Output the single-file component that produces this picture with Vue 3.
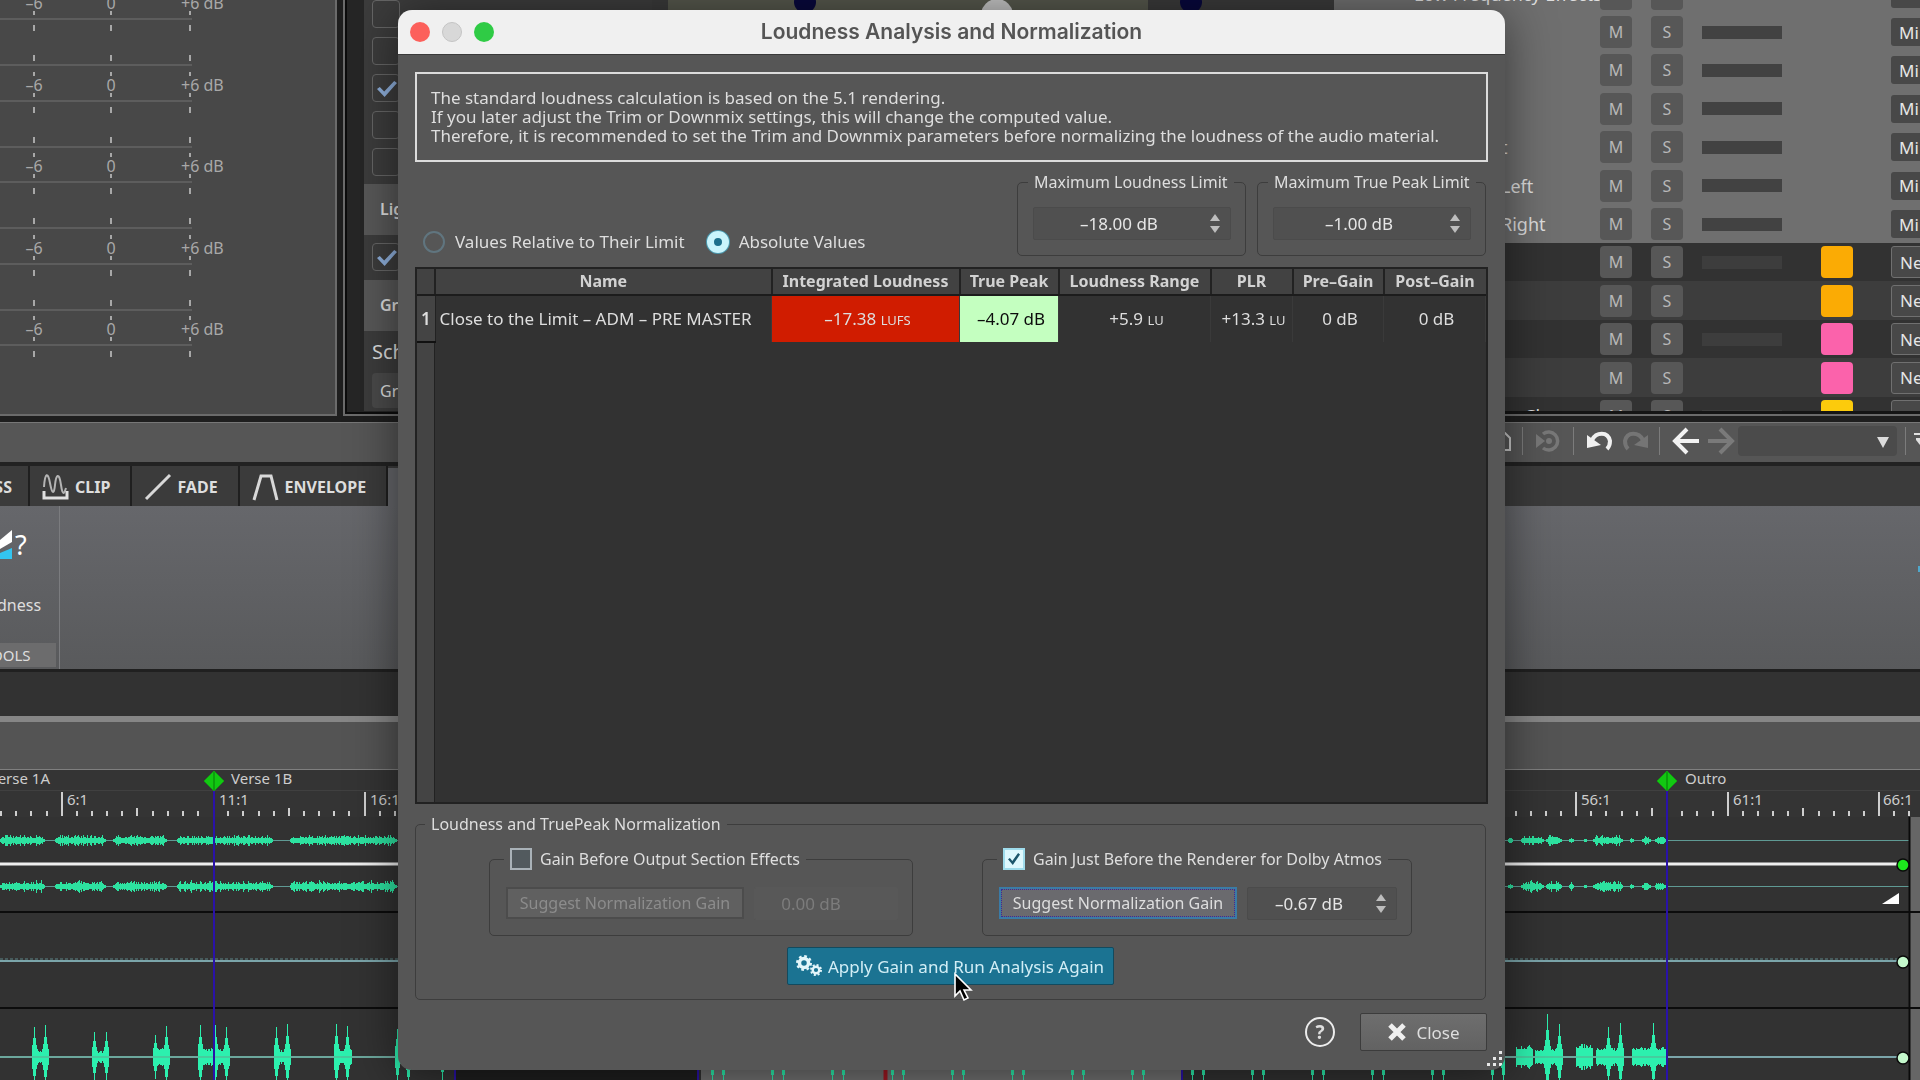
<template>
  <div class="desktop">
    <div class="panels">
      <section class="meters" aria-label="Meters">
        <svg class="meter-scale" aria-hidden="true">
          <g v-for="y in meterRows" :key="y">
            <text class="scale-text" x="34" :y="y + 6" text-anchor="middle">–6</text>
            <text class="scale-text" x="111" :y="y + 6" text-anchor="middle">0</text>
            <text class="scale-text" x="181" :y="y + 6">+6 dB</text>
            <path
              v-for="x in [34, 111, 190]"
              :key="x"
              class="scale-tick"
              :d="`M${x} ${y - 13}v4M${x} ${y + 8}v4M${x} ${y + 22}v6M${x} ${y + 52}v6`"
            />
            <path class="scale-line" :d="`M0 ${y + 16}H192M0 ${y + 62}H192`" />
          </g>
          <rect x="0" y="364" width="330" height="40" fill="#484848" />
        </svg>
      </section>

      <section class="settings" aria-label="Settings">
        <div class="settings-inner">
          <div class="tile-group">
            <input v-for="(on, i) in tiles" :key="i" type="checkbox" class="tile" :checked="on" :aria-label="`Option ${i + 1}`" />
          </div>
          <div class="settings-head">Lig</div>
          <div class="tile-group single">
            <input type="checkbox" class="tile" checked aria-label="Light option" />
          </div>
          <div class="settings-head">Gr</div>
          <div class="settings-label">Sch</div>
          <button class="settings-btn">Gr</button>
        </div>
      </section>

      <section class="scene" aria-label="Scene">
        <svg width="666" height="12" aria-hidden="true">
          <rect x="16" width="480" height="12" fill="#55574c" />
          <circle cx="153" cy="2" r="11" fill="#08083c" />
          <circle cx="345" cy="15" r="16" fill="#c4c4c4" />
          <circle cx="539" cy="2" r="11" fill="#08083c" />
        </svg>
      </section>

      <section class="channels" aria-label="Channels">
        <div v-for="(row, i) in channels" :key="i" class="channel" :class="{ dark: row.color, alt: row.alt }">
          <span class="channel-name" :class="row.place">{{ row.name }}</span>
          <button class="ms">M</button>
          <button class="ms">S</button>
          <span class="level"></span>
          <span class="swatch" :class="row.color"></span>
          <select class="channel-select" :aria-label="`Channel ${i + 1} type`">
            <option>{{ row.color ? 'Ne' : 'Mi' }}</option>
          </select>
        </div>
      </section>
    </div>

    <div class="toolbar">
      <button class="tool" aria-label="Page">
        <svg width="28" height="24" viewBox="0 0 28 24"><path d="M8 4h13l5 5v12H8z" fill="none" stroke="#c8c8c8" stroke-width="2" /></svg>
      </button>
      <i class="sep"></i>
      <button class="tool wide" aria-label="Target" disabled>
        <svg width="26" height="26" viewBox="0 0 26 26">
          <path d="M8 6A9 9 0 1 1 8 20" fill="none" stroke="#787878" stroke-width="3.500" />
          <path d="M1 6v14l9-7z" fill="#787878" />
          <circle cx="14" cy="13" r="3" fill="#787878" />
        </svg>
      </button>
      <i class="sep"></i>
      <button class="tool" aria-label="Undo">
        <svg width="28" height="26" viewBox="0 0 28 26">
          <path d="M6 12C10 4 22 3 24 13c0 4-1 6-3 8" fill="none" stroke="#f0f0f0" stroke-width="4" />
          <path d="M1 7v13l14-3z" fill="#f0f0f0" />
        </svg>
      </button>
      <button class="tool" aria-label="Redo" disabled>
        <svg width="28" height="26" viewBox="0 0 28 26">
          <path d="M22 12C18 4 6 3 4 13c0 4 1 6 3 8" fill="none" stroke="#757575" stroke-width="4" />
          <path d="M27 7v13l-14-3z" fill="#757575" />
        </svg>
      </button>
      <i class="sep"></i>
      <button class="tool" aria-label="Back">
        <svg width="28" height="28" viewBox="0 0 28 28"><path d="M27 14H4M15 2L3 14l12 12" fill="none" stroke="#f2f2f2" stroke-width="4" /></svg>
      </button>
      <button class="tool" aria-label="Forward" disabled>
        <svg width="28" height="28" viewBox="0 0 28 28"><path d="M1 14h23M13 2l12 12-12 12" fill="none" stroke="#7a7a7a" stroke-width="4" /></svg>
      </button>
      <span class="combo">
        <select aria-label="History"><option></option></select>
      </span>
      <i class="sep"></i>
      <svg class="menu-cut" width="6" height="20" viewBox="0 0 6 20" aria-hidden="true"><path d="M0 3h6M2 8h4" stroke="#e0e0e0" stroke-width="2" /><path d="M2 9l4 5V9z" fill="#e0e0e0" /></svg>
    </div>

    <nav class="tabs">
      <button class="tab tab-cut">SS</button>
      <button class="tab">
        <svg width="28" height="28" viewBox="0 0 28 28"><path d="M2 14C3-1 6-1 8 10s4 12 5 2 4-14 6 0 4 6 5 3" fill="none" stroke="#b4b4b4" stroke-width="2" /><path d="M2 18v7h23v-7" fill="none" stroke="#e0e0e0" stroke-width="3" /></svg>
        CLIP
      </button>
      <button class="tab">
        <svg width="28" height="28" viewBox="0 0 28 28"><path d="M2 26L26 2" stroke="#d8d8d8" stroke-width="3" /></svg>
        FADE
      </button>
      <button class="tab">
        <svg width="28" height="28" viewBox="0 0 28 28"><path d="M2 27L9 3h10l6 24" fill="none" stroke="#d8d8d8" stroke-width="3" /></svg>
        ENVELOPE
      </button>
      <span class="tab-active"></span>
    </nav>

    <div class="ribbon">
      <div class="ribbon-group">
        <button class="ribbon-tool">
          <svg width="42" height="36" viewBox="0 0 42 36" aria-hidden="true">
            <path d="M0 14L12 4v12L0 23z" fill="#fff" />
            <path d="M0 27l12-5v11H0z" fill="#33c4f0" />
            <text x="15" y="29" class="question">?</text>
          </svg>
          <span>dness</span>
        </button>
        <div class="ribbon-title">OOLS</div>
      </div>
      <i class="ribbon-dot"></i>
    </div>
    <div class="gap-bar"></div>
    <div class="scroll-bar"></div>

    <div class="timeline">
      <svg class="timeline-art" aria-hidden="true">
        <rect x="0" y="0" width="100%" height="47" fill="#343434" />
        <path d="M0 20.500H1920" stroke="#404040" />
        <path :d="ticks" stroke="#cfcfcf" stroke-width="2" />
        <text v-for="m in bars" :key="m.text" class="ruler-text" :x="m.x" y="35">{{ m.text }}</text>
        <text class="ruler-text" x="50" y="14" text-anchor="end">erse 1A</text>
        <text class="ruler-text" x="231" y="14">Verse 1B</text>
        <text class="ruler-text" x="1685" y="14">Outro</text>

        <rect x="1910" y="47" width="400" height="300" fill="#666" />
        <rect x="456" y="298" width="243" height="40" fill="#1f1f1f" />
        <rect x="701" y="298" width="481" height="40" fill="#707070" />

        <path d="M0 70.500H1909M0 116.500H1909" stroke="#5f9a94" stroke-width="1" />
        <path :d="stereo" stroke="#2de2a0" stroke-width="1" />
        <path d="M0 94H1903" stroke="#efefef" stroke-width="3" />
        <path d="M0 142H1920M0 238H1920" stroke="#0c0c0c" stroke-width="2" />
        <path d="M0 191H1903M0 287H1903" stroke="#7ba5aa" stroke-width="2" />
        <path d="M0 189H1903" stroke="#5d8487" stroke-width="1" stroke-dasharray="3 2" />
        <path :d="bursts" stroke="#2cf0ae" stroke-width="1" />
        <path d="M0 287H396M1505 287H1668" stroke="#5fa98f" stroke-width="1" />
        <path d="M885.500 298v20" stroke="#a01822" stroke-width="4" />

        <path d="M214 20V400M1667 20V400M455 298v20M698 298v20M1182 298v20" stroke="#2a12a8" stroke-width="2" />
        <g v-for="x in [214, 1667]" :key="x">
          <path :d="`M${x} 1l10 10l-10 10l-10 -10z`" fill="#12c812" stroke="#12a012" stroke-width="1" />
          <path :d="`M${x} 2v18`" stroke="#067806" />
        </g>
        <path d="M1909.500 47V400" stroke="#0a0a0a" stroke-width="2" />
        <circle cx="1903" cy="95" r="6" fill="#1de81d" stroke="#0a0a0a" stroke-width="1.500" />
        <circle cx="1903" cy="192" r="6" fill="#c4f8cc" stroke="#0a0a0a" stroke-width="1.500" />
        <circle cx="1903" cy="288" r="6" fill="#c4f8cc" stroke="#0a0a0a" stroke-width="1.500" />
        <path d="M1882 134l17-11v11z" fill="#fff" />
      </svg>
    </div>

    <div class="dialog" role="dialog" aria-labelledby="dialog-title">
      <header class="titlebar">
        <button class="light red" aria-label="Close window"></button>
        <button class="light grey" aria-label="Minimize window"></button>
        <button class="light green" aria-label="Zoom window"></button>
        <h1 id="dialog-title">Loudness Analysis and Normalization</h1>
      </header>

      <div class="dialog-body">
        <p class="info">
          The standard loudness calculation is based on the 5.1 rendering.<br />
          If you later adjust the Trim or Downmix settings, this will change the computed value.<br />
          Therefore, it is recommended to set the Trim and Downmix parameters before normalizing the loudness of the audio material.
        </p>

        <div class="limits">
          <div class="modes">
            <label><input v-model="mode" type="radio" value="relative" class="radio" />Values Relative to Their Limit</label>
            <label><input v-model="mode" type="radio" value="absolute" class="radio" />Absolute Values</label>
          </div>
          <fieldset class="limit">
            <legend>Maximum Loudness Limit</legend>
            <span class="spin">
              <input v-model="maxLoudness" type="text" aria-label="Maximum Loudness Limit" />
              <span class="arrows"><button class="up" aria-label="Increase"></button><button class="down" aria-label="Decrease"></button></span>
            </span>
          </fieldset>
          <fieldset class="limit">
            <legend>Maximum True Peak Limit</legend>
            <span class="spin">
              <input v-model="maxPeak" type="text" aria-label="Maximum True Peak Limit" />
              <span class="arrows"><button class="up" aria-label="Increase"></button><button class="down" aria-label="Decrease"></button></span>
            </span>
          </fieldset>
        </div>

        <div class="results">
          <table>
            <colgroup>
              <col class="c-index" /><col /><col class="c-loud" /><col class="c-peak" /><col class="c-range" />
              <col class="c-plr" /><col class="c-pre" /><col class="c-post" />
            </colgroup>
            <thead>
              <tr>
                <th></th>
                <th v-for="h in headers" :key="h">{{ h }}</th>
              </tr>
            </thead>
            <tbody>
              <tr>
                <th class="index">1</th>
                <td class="name">Close to the Limit – ADM – PRE MASTER</td>
                <td class="over">–17.38 <span class="unit">LUFS</span></td>
                <td class="ok">–4.07 dB</td>
                <td>+5.9 <span class="unit">LU</span></td>
                <td>+13.3 <span class="unit">LU</span></td>
                <td>0 dB</td>
                <td>0 dB</td>
              </tr>
            </tbody>
          </table>
        </div>

        <fieldset class="normalization">
          <legend>Loudness and TruePeak Normalization</legend>
          <div class="gains">
            <fieldset class="gain">
              <legend><label><input v-model="gainBefore" type="checkbox" class="check" />Gain Before Output Section Effects</label></legend>
              <button class="suggest" disabled>Suggest Normalization Gain</button>
              <span class="spin off">
                <input type="text" value="0.00 dB" disabled aria-label="Gain before output section" />
              </span>
            </fieldset>
            <fieldset class="gain">
              <legend><label><input v-model="gainRenderer" type="checkbox" class="check" />Gain Just Before the Renderer for Dolby Atmos</label></legend>
              <button class="suggest focused">Suggest Normalization Gain</button>
              <span class="spin">
                <input v-model="rendererGain" type="text" aria-label="Gain before renderer" />
                <span class="arrows"><button class="up" aria-label="Increase"></button><button class="down" aria-label="Decrease"></button></span>
              </span>
            </fieldset>
          </div>
          <button class="apply">
            <svg width="26" height="22" viewBox="0 0 26 22" aria-hidden="true">
              <circle cx="8" cy="8" r="4.500" fill="none" stroke="#e4f6fa" stroke-width="3.500" />
              <circle cx="8" cy="8" r="6.800" fill="none" stroke="#e4f6fa" stroke-width="2.400" stroke-dasharray="2.700 2.640" />
              <circle cx="20" cy="15" r="3.300" fill="none" stroke="#e4f6fa" stroke-width="2.400" />
              <circle cx="20" cy="15" r="5" fill="none" stroke="#e4f6fa" stroke-width="2" stroke-dasharray="2 1.927" />
            </svg>
            Apply Gain and Run Analysis Again
          </button>
        </fieldset>

        <footer class="actions">
          <button class="help" aria-label="Help">?</button>
          <button class="close">
            <svg width="20" height="20" viewBox="0 0 20 20" aria-hidden="true"><path d="M3 3l14 14M17 3L3 17" stroke="#efefef" stroke-width="5" /></svg>
            Close
          </button>
        </footer>
      </div>

      <svg class="grip" width="18" height="18" viewBox="0 0 18 18" aria-hidden="true">
        <path d="M14 1h3v3h-3zM8 7h3v3H8zM14 7h3v3h-3zM2 13h3v3H2zM8 13h3v3H8zM14 13h3v3h-3z" fill="#e8e8e8" />
      </svg>
    </div>

    <svg class="cursor" width="20" height="30" viewBox="0 0 20 30" aria-hidden="true">
      <path d="M2 2v22l5-5 4 9 4-2-4-8h7z" fill="#000" stroke="#fff" stroke-width="1.600" />
    </svg>
  </div>
</template>

<script setup>
import { ref } from 'vue'

const mode = ref('absolute')
const maxLoudness = ref('–18.00 dB')
const maxPeak = ref('–1.00 dB')
const gainBefore = ref(false)
const gainRenderer = ref(true)
const rendererGain = ref('–0.67 dB')

const headers = ['Name', 'Integrated Loudness', 'True Peak', 'Loudness Range', 'PLR', 'Pre–Gain', 'Post–Gain']

const meterRows = [3, 85, 166, 248, 329]
const tiles = [false, false, true, false, false]

const channels = [
  { name: 'Low Frequency Effects' },
  { name: '' },
  { name: '' },
  { name: '' },
  { name: 't', place: 'far' },
  { name: 'Left', place: 'far' },
  { name: 'Right', place: 'far' },
  { name: '', color: 'orange' },
  { name: '', color: 'orange', alt: true },
  { name: '', color: 'pink' },
  { name: '', color: 'pink', alt: true },
  { name: 'Cl', color: 'yellow', place: 'tail' }
]

const bars = [
  { x: 67, text: '6:1' },
  { x: 219, text: '11:1' },
  { x: 370, text: '16:1' },
  { x: 1581, text: '56:1' },
  { x: 1733, text: '61:1' },
  { x: 1883, text: '66:1' }
]

// one tick per bar, taller in the middle and at every numbered bar; none under a marker
let ticks = ''
for (let i = -4; i <= 122; i++) {
  if (i === 10 || i === 106) continue
  const x = Math.round(61.700 + i * 15.145)
  const n = ((i % 10) + 10) % 10
  const h = n === 0 ? 24 : n === 5 ? 8 : 5
  ticks += `M${x} ${46 - h}V46`
}

let seed = 7
function rand() {
  seed = (seed * 16807) % 2147483647
  return seed / 2147483647
}

const segments = [
  [0, 45], [55, 106], [113, 167], [177, 273], [290, 397],
  [1508, 1513], [1521, 1544], [1546, 1562], [1569, 1574], [1584, 1587], [1593, 1623], [1630, 1634], [1642, 1651], [1655, 1666]
]
let stereo = ''
for (const [from, to] of segments) {
  for (let x = from; x < to; x++) {
    const edge = Math.min(1, (x - from + 1) / 4, (to - x) / 4)
    const a = Math.round((2 + rand() * rand() * 4) * edge)
    const b = Math.round((2 + rand() * rand() * 4) * edge)
    stereo += `M${x}.5 ${70 - a}V${71 + a}M${x}.5 ${116 - b}V${117 + b}`
  }
}

// [start, end, body, [spike x, spike height]...]
const hits = [
  [32, 49, 6, [34, 30], [45, 32]],
  [92, 109, 6, [94, 25], [106, 25]],
  [153, 170, 8, [155, 22], [166, 31]],
  [198, 230, 8, [200, 32], [215, 32], [226, 30]],
  [274, 291, 7, [276, 30], [287, 33]],
  [334, 352, 7, [336, 33], [347, 31]],
  [395, 412, 7, [397, 28], [408, 32]],
  [440, 444, 4, [442, 24]],
  [1516, 1533, 11],
  [1535, 1563, 8, [1547, 43], [1559, 33]],
  [1576, 1593, 12],
  [1596, 1624, 9, [1608, 30], [1620, 34]],
  [1632, 1668, 9, [1653, 34]]
]
for (let x = 711; x < 1500; x += 60) hits.push([x, x + 14, 5, [x + 1, 28], [x + 12, 28]])

let bursts = ''
for (const [from, to, body, ...spikes] of hits) {
  for (let x = from; x < to; x++) {
    let a = body * (0.700 + rand() * 0.400)
    for (const [sx, h] of spikes) a = Math.max(a, h * Math.exp(-Math.abs(x - sx) / 2.200))
    a = Math.round(a)
    bursts += `M${x}.5 ${287 - a}V${287 + a}`
  }
}
</script>

<style>
body {
  margin: 0;
  background: #323232;
}
</style>

<style scoped>
.desktop {
  position: relative;
  display: flex;
  flex-direction: column;
  height: 100vh;
  overflow: hidden;
  background: #323232;
  color: #dedede;
  font-family: "Noto Sans", "Open Sans", sans-serif;
  font-size: 16px;
}
button,
input,
select {
  font: inherit;
  color: inherit;
  margin: 0;
  padding: 0;
  border: none;
  background: none;
  appearance: none;
  box-sizing: border-box;
}
svg {
  display: block;
  flex: none;
}

/* top panels */
.panels {
  display: flex;
  height: 416px;
  flex: none;
  background: #1e1e1e;
}
.meters {
  width: 335px;
  flex: none;
  background: #484848;
  border-right: 2px solid #6b6b6b;
  border-bottom: 2px solid #6b6b6b;
  overflow: hidden;
}
.meter-scale {
  width: 100%;
  height: 414px;
}
.scale-text {
  fill: #a8a8a8;
  font-size: 16px;
}
.scale-tick {
  stroke: #a8a8a8;
  stroke-width: 2;
}
.scale-line {
  stroke: #737373;
  stroke-width: 1;
}
.settings {
  flex: 1;
  margin-left: 6px;
  padding: 0 0 3px 15px;
  border-left: 2px solid #6b6b6b;
  border-bottom: 2px solid #6b6b6b;
  background: #262626;
  box-shadow: inset 2px -2px 0 #0c0c0c;
}
.settings-inner {
  display: flex;
  flex-direction: column;
  align-items: flex-start;
  height: 411px;
  margin-left: 4px;
  background: #3c3c3c;
  overflow: hidden;
}
.tile-group {
  display: flex;
  flex-direction: column;
  gap: 9px;
  padding: 0 8px 8px;
}
.tile-group.single {
  padding: 8px 8px 9px;
}
.tile {
  width: 28px;
  height: 28px;
  border: 1px solid #666;
  border-radius: 4px;
}
.tile:checked::before {
  content: "";
  display: block;
  width: 20px;
  height: 16px;
  margin: 6px 4px;
  background: #8fb0dc;
  clip-path: polygon(0 50%, 14% 38%, 36% 66%, 86% 0, 100% 12%, 38% 100%);
}
.settings-head {
  width: 100%;
  padding-left: 16px;
  box-sizing: border-box;
  height: 51px;
  line-height: 51px;
  background: #585858;
  font-weight: 600;
}
.settings-label {
  padding-left: 8px;
  line-height: 42px;
  font-size: 20px;
}
.settings-btn {
  width: 200px;
  height: 35px;
  margin-left: 8px;
  padding-left: 8px;
  text-align: left;
  background: #4a4a4a;
  border-radius: 4px;
}
.scene {
  width: 682px;
  flex: none;
  background: #3a3a3a;
}
.channels {
  width: 586px;
  flex: none;
  height: 411px;
  overflow: hidden;
  border-bottom: 3px solid #151515;
  box-shadow: 0 2px 0 #6b6b6b;
  background: #6f6f6f;
}
.channel {
  display: grid;
  grid-template-columns: 247px 32px 32px 80px 32px 1fr;
  column-gap: 19px;
  align-items: center;
  height: 38px;
}
.channel:nth-child(5n + 1),
.channel:nth-child(5n + 4) {
  height: 39px;
}
.channel:first-child {
  margin-top: -26px;
}
.channel.dark {
  background: #323232;
}
.channel.dark.alt {
  background: #3d3d3d;
}
.channel-name {
  padding-left: 80px;
  font-size: 18px;
  white-space: nowrap;
}
.channel-name.far {
  padding-left: 167px;
}
.channel-name.tail {
  padding-left: 190px;
}
.ms {
  width: 32px;
  height: 32px;
  border-radius: 4px;
  background: #575757;
  color: #b8b8b8;
}
.level {
  height: 13px;
  background: #424242;
}
.dark .level {
  background: #3d3d3d;
}
.swatch {
  width: 32px;
  height: 32px;
  margin-left: 20px;
  border-radius: 4px;
}
.swatch.orange {
  background: #fbab04;
}
.swatch.pink {
  background: #fb62ab;
}
.swatch.yellow {
  background: #fccb0c;
}
.channel-select {
  width: 120px;
  height: 28px;
  margin-left: 39px;
  padding-left: 8px;
  border-radius: 3px;
  background: #484848;
  color: #e6e6e6;
  font-size: 17px;
}
.dark .channel-select {
  height: 32px;
  border: 1px solid #707070;
}

/* toolbar, tabs, ribbon */
.toolbar {
  display: flex;
  align-items: center;
  justify-content: flex-end;
  flex: none;
  height: 42px;
  margin-top: 6px;
  padding-bottom: 3px;
  box-sizing: border-box;
  border-top: 1px solid #777;
  border-bottom: 2px solid #222;
  background: #565656;
  box-shadow: 0 -6px 0 #1e1e1e;
}
.tool {
  width: 35px;
  display: flex;
  justify-content: center;
}
.tool.wide {
  width: 50px;
}
.sep {
  width: 1px;
  height: 28px;
  background: #7c7c7c;
}
.sep + .tool:not(.wide) {
  margin-left: 8px;
}
.tool + .sep {
  margin-left: 7px;
}
.tool.wide + .sep {
  margin-left: 0;
}
.combo {
  position: relative;
  width: 159px;
  height: 30px;
  margin-right: 8px;
}
.combo select {
  width: 100%;
  height: 100%;
  border-radius: 4px;
  background: #4b4b4b;
}
.combo::after {
  content: "";
  position: absolute;
  right: 8px;
  top: 11px;
  border: 6px solid transparent;
  border-top: 11px solid #dcdcdc;
  border-bottom: none;
  pointer-events: none;
}
.menu-cut {
  margin-left: 8px;
}
.tabs {
  display: flex;
  flex: none;
  height: 42px;
  background: #3b3b3b;
  border-top: 2px solid #222;
  box-sizing: border-box;
}
.tab {
  display: flex;
  align-items: center;
  gap: 5px;
  padding: 2px 20px 0 12px;
  border-right: 2px solid #1f1f1f;
  font-size: 16px;
  font-weight: 700;
}
.tab-cut {
  padding: 2px 16px 0 0;
  width: 30px;
  justify-content: flex-end;
}
.tab-active {
  width: 160px;
  margin-top: 2px;
  background: #66676b;
}
.ribbon {
  display: flex;
  flex: none;
  height: 163px;
  justify-content: space-between;
  background: linear-gradient(#66676b, #595a5c);
}
.ribbon-group {
  display: flex;
  flex-direction: column;
  justify-content: space-between;
  width: 59px;
  border-right: 1px solid #7b7c7f;
  overflow: hidden;
}
.ribbon-tool {
  display: flex;
  flex-direction: column;
  gap: 32px;
  padding-top: 20px;
  align-items: flex-start;
}
.ribbon-tool span {
  text-indent: -3px;
}
.question {
  fill: #fff;
  font-size: 27px;
}
.ribbon-title {
  width: 56px;
  height: 24px;
  line-height: 24px;
  margin-bottom: 2px;
  background: #6c6c6d;
  font-size: 15px;
  text-indent: -9px;
}
.ribbon-dot {
  width: 2px;
  height: 6px;
  margin-top: 60px;
  background: #4fa8cc;
}
.gap-bar {
  flex: none;
  height: 47px;
  box-sizing: border-box;
  background: #323232;
  border-top: 3px solid #202020;
}
.scroll-bar {
  flex: none;
  height: 54px;
  box-sizing: border-box;
  background: #545454;
  border-top: 6px solid #868686;
  border-bottom: 1px solid #7f7f7f;
}
.timeline {
  flex: 1;
  min-height: 0;
  overflow: hidden;
}
.timeline-art {
  width: 100%;
  height: 100%;
}
.ruler-text {
  fill: #cdcdcd;
  font-size: 15px;
}

/* dialog */
.dialog {
  position: absolute;
  left: 398px;
  right: 415px;
  top: 10px;
  bottom: 10px;
  display: flex;
  flex-direction: column;
  border-radius: 14px;
  background: #565656;
  overflow: hidden;
  filter: drop-shadow(0 4px 24px rgb(0 0 0 / 0.5));
  font-size: 17px;
}
.titlebar {
  display: flex;
  align-items: center;
  gap: 12px;
  height: 44px;
  flex: none;
  padding: 0 12px;
  background: #f0f0f0;
  border-bottom: 1px solid #3a3a3a;
}
.titlebar h1 {
  flex: 1;
  margin: 0;
  padding-right: 96px;
  text-align: center;
  font-family: Inter, sans-serif;
  font-size: 21px;
  line-height: 24px;
  font-weight: 600;
  color: #555;
}
.light {
  width: 20px;
  height: 20px;
  border-radius: 50%;
}
.light.red {
  background: #fc605b;
}
.light.grey {
  background: #d8d8d8;
  border: 1px solid #c4c4c4;
}
.light.green {
  background: #2fcb45;
}
.dialog-body {
  flex: 1;
  display: flex;
  flex-direction: column;
  padding: 17px 17px 19px;
}
.info {
  margin: 0;
  padding: 14px 14px 15px;
  border: 2px solid #dcdcdc;
  line-height: 19px;
}
.limits {
  display: flex;
  gap: 11px;
  margin: 10px 2px 11px 0;
}
.modes {
  flex: 1;
  display: flex;
  align-items: flex-end;
  gap: 22px;
  padding: 0 0 2px 8px;
}
.modes label {
  display: flex;
  align-items: center;
  gap: 10px;
  line-height: 24px;
}
.radio {
  width: 22px;
  height: 22px;
  border: 2px solid #60757f;
  border-radius: 50%;
}
.radio:checked {
  border: 7px solid #c8f4fc;
  background: #1c6f8c;
  box-shadow: 0 0 0 1px #4a98ae;
}
fieldset {
  margin: 0;
  border: 1px solid #3d3d3d;
  border-radius: 5px;
  min-width: 0;
}
legend {
  padding: 0 6px;
  font-size: 16px;
  line-height: 20px;
  white-space: nowrap;
}
.limit {
  width: 229px;
  box-sizing: border-box;
  padding: 15px 14px 15px 15px;
}
.limit legend {
  margin-left: -5px;
}
.spin {
  display: flex;
  align-items: center;
  height: 33px;
  box-sizing: border-box;
  border: 1px solid #4b4b4b;
  border-radius: 2px;
  background: #505050;
}
.spin input {
  flex: 1;
  width: 0;
  height: 100%;
  text-align: center;
  color: #e6e6e6;
}
.arrows {
  display: flex;
  flex-direction: column;
  gap: 5px;
  padding: 0 10px 0 6px;
}
.up,
.down {
  border: 5px solid transparent;
}
.up {
  border-top: none;
  border-bottom: 7px solid #bdbdbd;
}
.down {
  border-bottom: none;
  border-top: 7px solid #bdbdbd;
}
.results {
  flex: 1;
  border: 2px solid #222;
  background: linear-gradient(to right, #444 17px, #222 17px 18px, #323232 18px);
}
table {
  width: 100%;
  table-layout: fixed;
  border-collapse: collapse;
}
.c-index {
  width: 18px;
}
.c-loud {
  width: 188px;
}
.c-peak {
  width: 99px;
}
.c-range {
  width: 152px;
}
.c-plr {
  width: 82px;
}
.c-pre {
  width: 91px;
}
.c-post {
  width: 102px;
}
thead th {
  height: 25px;
  padding: 0;
  line-height: 25px;
  background: #424242;
  border-right: 2px solid #222;
  border-bottom: 2px solid #1c1c1c;
  font-size: 16px;
  font-weight: 700;
  color: #d2d2d2;
  white-space: nowrap;
}
thead th:last-child {
  border-right: none;
}
tbody td,
tbody th {
  height: 47px;
  padding: 0 0 2px 4px;
  box-sizing: border-box;
  text-align: center;
  white-space: nowrap;
  border-right: 1px solid #3a3a3a;
}
tbody .index {
  padding: 0;
  background: #444;
  border-right-color: #222;
  border-bottom: 2px solid #111;
  font-weight: 600;
}
tbody .name {
  text-align: left;
}
.over {
  background: #d01c00;
}
.ok {
  background: #c4ffc0;
  color: #0c0c0c;
}
.unit {
  font-size: 13px;
}
.normalization {
  margin: 10px 2px 0 0;
  padding: 13px 73px 14px;
}
.normalization > legend {
  margin-left: -64px;
}
.gains {
  display: flex;
  justify-content: space-between;
}
.gain {
  display: flex;
  align-items: center;
  gap: 10px;
  height: 89px;
  box-sizing: border-box;
  padding: 0 14px 0 16px;
}
.gain legend {
  margin-left: -2px;
}
.gain legend label {
  display: flex;
  align-items: center;
  gap: 8px;
  line-height: 24px;
}
.check {
  width: 22px;
  height: 22px;
  border: 2px solid #a9b2b8;
  background: #525a5e;
}
.check:checked {
  border-color: #9fdcec;
  background: #def8fe;
}
.check:checked::before {
  content: "";
  display: block;
  width: 12px;
  height: 12px;
  margin: 3px;
  background: #1c566c;
  clip-path: polygon(0 52%, 16% 42%, 36% 66%, 84% 0, 100% 12%, 40% 100%);
}
.suggest {
  height: 32px;
  width: 238px;
  flex: none;
  border: 2px solid #4c4c4c;
  background: #606060;
  font-size: 16px;
  white-space: nowrap;
}
.suggest:disabled {
  color: #8c8c8c;
}
.suggest.focused {
  border-color: #3b7ba6;
  background: #6a6a6e;
  outline: 1px dotted #3a2a9a;
  outline-offset: -3px;
}
.gain .spin {
  width: 150px;
}
.gain .spin.off {
  width: 144px;
  border-color: #585858;
  background: #585858;
}
.spin.off input {
  color: #7c7c7c;
  padding-right: 30px;
}
.apply {
  display: flex;
  align-items: center;
  gap: 6px;
  height: 38px;
  margin: 11px auto 0;
  padding: 0 9px 0 8px;
  border: 1px solid #124a5e;
  border-radius: 2px;
  background: #1b7392;
  color: #d2eef6;
  white-space: nowrap;
}
.actions {
  display: flex;
  justify-content: flex-end;
  align-items: center;
  gap: 25px;
  margin: 13px 1px 0 0;
}
.help {
  width: 30px;
  height: 30px;
  border: 2px solid #ececec;
  border-radius: 50%;
  font-size: 19px;
  font-weight: 700;
  line-height: 24px;
}
.close {
  display: flex;
  align-items: center;
  justify-content: center;
  gap: 9px;
  width: 127px;
  height: 38px;
  border: 1px solid #3c3c3c;
  border-radius: 2px;
  background: linear-gradient(#6e6e6e, #626262);
}
.grip {
  position: absolute;
  right: 2px;
  bottom: 2px;
}
.cursor {
  position: absolute;
  left: 953px;
  top: 972px;
}
</style>
